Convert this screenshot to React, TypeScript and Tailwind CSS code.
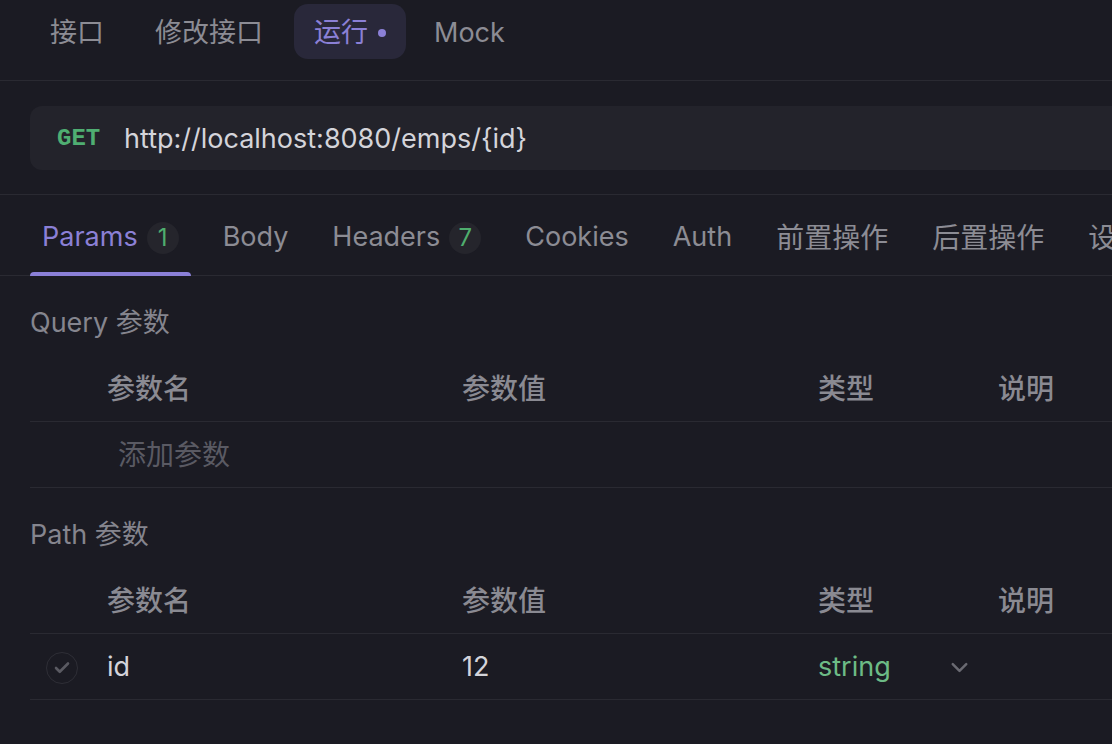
import { Check, ChevronDown } from "lucide-react";

const font = { fontFamily: '"Inter", "Noto Sans CJK SC", sans-serif' };

const topTabs = ["接口", "修改接口", "运行", "Mock"];

const subTabs: { label: string; badge?: string; cjk?: boolean }[] = [
	{ label: "Params", badge: "1" },
	{ label: "Body" },
	{ label: "Headers", badge: "7" },
	{ label: "Cookies" },
	{ label: "Auth" },
	{ label: "前置操作", cjk: true },
	{ label: "后置操作", cjk: true },
	{ label: "设置", cjk: true },
];

function HeaderRow() {
	return (
		<div className="flex h-[66px] items-center border-b border-[#2a2a32] text-[28px] font-medium text-[#8a8a92]">
			<div className="w-[77px] shrink-0" />
			<div className="w-[355px] shrink-0">参数名</div>
			<div className="w-[356px] shrink-0">参数值</div>
			<div className="w-[180px] shrink-0">类型</div>
			<div className="shrink-0">说明</div>
		</div>
	);
}

function SectionTitle({ children }: { children: React.ReactNode }) {
	return (
		<div className="h-[80px] pt-[30px] text-[27px] leading-[34px] text-[#85858e]">
			{children}
		</div>
	);
}

export default function App() {
	return (
		<main
			className="h-[744px] w-[1112px] overflow-hidden bg-[#1b1b23]"
			style={font}
		>
			{/* top tabs */}
			<div className="flex h-[81px] items-start gap-[11px] border-b border-[#2a2a32] pl-[30px] pt-[4px]">
				{topTabs.map((t) =>
					t === "运行" ? (
						<div
							key={t}
							className="mr-[-3px] flex h-[55px] items-center gap-[10px] rounded-[14px] bg-[#29283a] px-5 pt-[3px] text-[27px] text-[#8b80d6]"
						>
							{t}
							<span className="h-[8px] w-[8px] rounded-full bg-[#8b80d6]" />
						</div>
					) : (
						<div
							key={t}
							className="flex h-[55px] items-center px-5 pt-[3px] text-[27px] text-[#8c8c94]"
						>
							{t}
						</div>
					),
				)}
			</div>

			{/* url bar */}
			<div className="-mr-6 border-b border-[#2a2a32] pb-[24px] pl-[30px] pt-[25px]">
				<div className="flex h-[64px] items-center rounded-xl bg-[#23232b] pl-[27px] pt-[2px]">
					<span
						className="w-[67px] text-[24px] font-bold text-[#4fae72]"
						style={{ fontFamily: '"Liberation Mono", monospace' }}
					>
						GET
					</span>
					<span className="text-[27px] text-[#d4d4da]">
						http://localhost:8080/emps/{"{id}"}
					</span>
				</div>
			</div>

			{/* sub tabs */}
			<div className="flex h-[81px] items-stretch gap-5 whitespace-nowrap border-b border-[#2a2a32] pl-[30px]">
				{subTabs.map((t, i) => (
					<div
						key={t.label}
						className={
							i === 0
								? "relative flex items-center gap-[9px] px-3 pt-[5px] text-[27px] text-[#8b80d6]"
								: t.cjk
									? "relative flex items-center gap-[9px] px-3 pt-[5px] text-[28px] text-[#8c8c94]"
									: "relative flex items-center gap-[9px] px-3 pt-[5px] text-[27px] text-[#8c8c94]"
						}
					>
						{t.label}
						{t.badge && (
							<span className="flex h-[32px] w-[32px] items-center justify-center rounded-full bg-[#25252c] text-[24px] text-[#4fae6e]">
								{t.badge}
							</span>
						)}
						{i === 0 && (
							<span className="absolute bottom-[-1px] left-0 right-0 h-[4px] rounded-t-sm bg-[#8b80d8]" />
						)}
					</div>
				))}
			</div>

			<div className="pl-[30px]">
				<SectionTitle>Query 参数</SectionTitle>
				<HeaderRow />
				<div className="flex h-[66px] items-center border-b border-[#2a2a32]">
					<div className="w-[77px] shrink-0" />
					<div className="pl-[11px] text-[28px] text-[#5a5a63]">添加参数</div>
				</div>

				<SectionTitle>Path 参数</SectionTitle>
				<HeaderRow />
				<div className="flex h-[66px] items-center border-b border-[#2a2a32] pt-[2px] text-[27px]">
					<div className="w-[77px] shrink-0 pl-4">
						<span className="flex h-[32px] w-[32px] items-center justify-center rounded-full border-[1.5px] border-[#2e2e36]">
							<Check size={18} strokeWidth={3.5} className="text-[#5a5a62]" />
						</span>
					</div>
					<div className="w-[355px] shrink-0 text-[#d4d4da]">id</div>
					<div className="w-[356px] shrink-0 text-[#d4d4da]">12</div>
					<div className="flex w-[180px] shrink-0 items-center text-[#6dbb86]">
						<span className="w-[128px]">string</span>
						<ChevronDown size={27} strokeWidth={2.2} className="text-[#6a6a72]" />
					</div>
					<div className="shrink-0" />
				</div>
			</div>
		</main>
	);
}
